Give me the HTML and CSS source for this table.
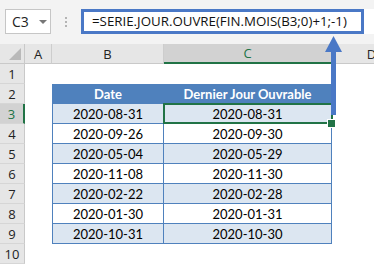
FILE: index.html
```html
<!DOCTYPE html>
<html lang="fr">
<head>
<meta charset="utf-8">
<link rel="stylesheet" href="styles.css">
</head>
<body>
<div class="app">
  <div class="toolbar">
    <div class="namebox"><span class="ref">C3</span><span class="caret"></span></div>
    <div class="sep"><i></i><i></i><i></i></div>
    <div class="fbar"><div class="fbox">=SERIE.JOUR.OUVRE(FIN.MOIS(B3;0)+1;-1)</div></div>
  </div>
  <div class="sheet">
    <div class="corner"><span class="tri"></span></div>
    <div class="ch">A</div><div class="ch">B</div><div class="ch csel">C</div><div class="ch">D</div>

    <div class="rh">1</div><div class="c"></div><div class="c"></div><div class="c"></div><div class="c"></div>

    <div class="rh">2</div><div class="c"></div><div class="t th tb">Date</div><div class="t th">Dernier Jour Ouvrable</div><div class="c"></div>

    <div class="rh rsel">3</div><div class="c"></div><div class="t alt tb">2020-08-31</div><div class="t alt active">2020-08-31</div><div class="c"></div>

    <div class="rh">4</div><div class="c"></div><div class="t tb">2020-09-26</div><div class="t">2020-09-30</div><div class="c"></div>

    <div class="rh">5</div><div class="c"></div><div class="t alt tb">2020-05-04</div><div class="t alt">2020-05-29</div><div class="c"></div>

    <div class="rh">6</div><div class="c"></div><div class="t tb">2020-11-08</div><div class="t">2020-11-30</div><div class="c"></div>

    <div class="rh">7</div><div class="c"></div><div class="t alt tb">2020-02-22</div><div class="t alt">2020-02-28</div><div class="c"></div>

    <div class="rh">8</div><div class="c"></div><div class="t tb">2020-01-30</div><div class="t">2020-01-31</div><div class="c"></div>

    <div class="rh">9</div><div class="c"></div><div class="t alt tb">2020-10-31</div><div class="t alt">2020-10-30</div><div class="c"></div>

    <div class="rh">10</div><div class="c"></div><div class="c"></div><div class="c"></div><div class="c"></div>
  </div>
  <svg class="arrow" width="374" height="264" viewBox="0 0 374 264">
    <polygon points="333.5,36 325,52 342,52" fill="#4a78c6"/>
    <rect x="331" y="51" width="5" height="64" fill="#4a78c6"/>
  </svg>
</div>
</body>
</html>
```

FILE: styles.css
```css
* { box-sizing: border-box; }
html, body { margin: 0; padding: 0; background: #fff; }
body { width: 374px; height: 264px; overflow: hidden; }

.app {
  position: relative;
  width: 374px;
  height: 264px;
  overflow: hidden;
  font-family: "Open Sans", "Noto Sans", sans-serif;
}

.toolbar {
  height: 44px;
  background: #f3f3f3;
  display: flex;
  align-items: flex-start;
  padding-top: 9px;
}

.namebox {
  margin-left: 5px;
  width: 46px;
  height: 25px;
  background: #fff;
  border: 1px solid #c6c6c6;
  display: flex;
  align-items: center;
  padding-left: 6px;
  gap: 10px;
}
.ref { font-size: 14px; color: #222; }
.caret {
  width: 0; height: 0;
  border-left: 4px solid transparent;
  border-right: 4px solid transparent;
  border-top: 4px solid #777;
}

.sep {
  width: 30px;
  height: 25px;
  display: flex;
  flex-direction: column;
  align-items: center;
  justify-content: center;
  gap: 2px;
}
.sep i { display: block; width: 2px; height: 2px; background: #b4b4b4; }

.fbar {
  flex: 1;
  height: 25px;
  background: #fff;
}
.fbox {
  width: 283px;
  height: 25px;
  border: 3px solid #4a78c6;
  padding-left: 8px;
  font-size: 13.3px;
  line-height: 19px;
  color: #111;
  white-space: nowrap;
}

.sheet {
  display: grid;
  grid-template-columns: 25px 27px 112px 168px 80px;
  grid-auto-rows: 20px;
  font-family: "Lato", "Liberation Sans", sans-serif;
}

.corner {
  background: #e6e6e6;
  border-right: 1px solid #c9c9c9;
  border-bottom: 1px solid #c9c9c9;
  position: relative;
}
.tri {
  position: absolute;
  right: 3px; bottom: 3px;
  width: 0; height: 0;
  border-left: 12px solid transparent;
  border-bottom: 12px solid #b9b9b9;
}

.ch {
  background: #e6e6e6;
  border-right: 1px solid #cdcdcd;
  border-bottom: 1px solid #c9c9c9;
  font-family: "Open Sans", sans-serif;
  font-size: 13px;
  color: #222;
  display: flex;
  align-items: center;
  justify-content: center;
}
.ch.csel {
  background: #d2d2d2;
  color: #217346;
  border-bottom: 2px solid #217346;
  border-right-color: #bdbdbd;
}

.rh {
  background: #e6e6e6;
  border-right: 1px solid #c9c9c9;
  border-bottom: 1px solid #d6d6d6;
  font-family: "Open Sans", sans-serif;
  font-size: 13px;
  color: #222;
  display: flex;
  align-items: center;
  justify-content: center;
}
.rh.rsel {
  background: #d2d2d2;
  color: #217346;
  border-right: 2px solid #217346;
}

.c { background: #fff; }

.t {
  background: #fff;
  border-right: 1px solid #4f81bd;
  border-bottom: 1px solid #4f81bd;
  font-size: 13px;
  color: #000;
  display: flex;
  align-items: center;
  justify-content: center;
  position: relative;
}
.t.tb { border-left: 1px solid #4f81bd; }
.t.alt { background: #dce6f1; }
.t.th {
  background: #4f81bd;
  color: #fff;
  font-weight: bold;
  font-size: 13px;
}

.active::after {
  content: "";
  position: absolute;
  left: -1px; top: -1px; right: -2px; bottom: -1px;
  border: 2px solid #217346;
}
.active::before {
  content: "";
  position: absolute;
  right: -5px; bottom: -5px;
  width: 7px; height: 7px;
  background: #217346;
  border: 1px solid #fff;
  z-index: 2;
}

.arrow {
  position: absolute;
  left: 0; top: 0;
  pointer-events: none;
  z-index: 5;
}
```
